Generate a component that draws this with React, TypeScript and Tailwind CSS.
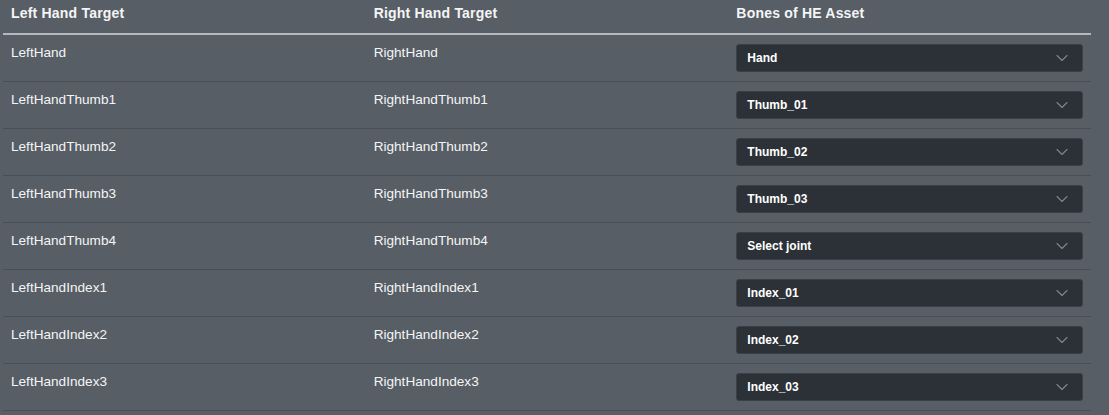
import { ChevronDown } from "lucide-react";

const rows = [
  { left: "LeftHand", right: "RightHand", bone: "Hand" },
  { left: "LeftHandThumb1", right: "RightHandThumb1", bone: "Thumb_01" },
  { left: "LeftHandThumb2", right: "RightHandThumb2", bone: "Thumb_02" },
  { left: "LeftHandThumb3", right: "RightHandThumb3", bone: "Thumb_03" },
  { left: "LeftHandThumb4", right: "RightHandThumb4", bone: "Select joint" },
  { left: "LeftHandIndex1", right: "RightHandIndex1", bone: "Index_01" },
  { left: "LeftHandIndex2", right: "RightHandIndex2", bone: "Index_02" },
  { left: "LeftHandIndex3", right: "RightHandIndex3", bone: "Index_03" },
];

export default function App() {
  return (
    <div
      className="min-h-[415px] w-full bg-[#575e65] pl-[3px] text-[#f4f5f6]"
      style={{ fontFamily: '"Liberation Sans", Arial, sans-serif' }}
    >
      <div className="w-[1088px]">
        <div className="grid h-[35px] grid-cols-3 border-b-2 border-[#b5b8bc] text-[14px] font-bold tracking-[0.2px]">
          <div className="px-2 pt-[3px]">Left Hand Target</div>
          <div className="px-2 pt-[3px]">Right Hand Target</div>
          <div className="px-2 pt-[3px]">Bones of HE Asset</div>
        </div>
        {rows.map((row) => (
          <div
            key={row.left}
            className="grid h-[47px] grid-cols-3 border-b border-[#484e55] text-[13.6px]"
          >
            <div className="px-2 pt-[8px]">{row.left}</div>
            <div className="px-2 pt-[8px]">{row.right}</div>
            <div className="px-2 pt-[9px]">
              <div className="flex h-[28px] items-center justify-between rounded-[3px] border border-[#3a4047] bg-[#2c3138] pl-[10px] pr-[10px] text-[12px] font-bold text-white">
                <span>{row.bone}</span>
                <ChevronDown className="h-5 w-5 text-[#7f858d]" strokeWidth={1.3} />
              </div>
            </div>
          </div>
        ))}
      </div>
    </div>
  );
}
